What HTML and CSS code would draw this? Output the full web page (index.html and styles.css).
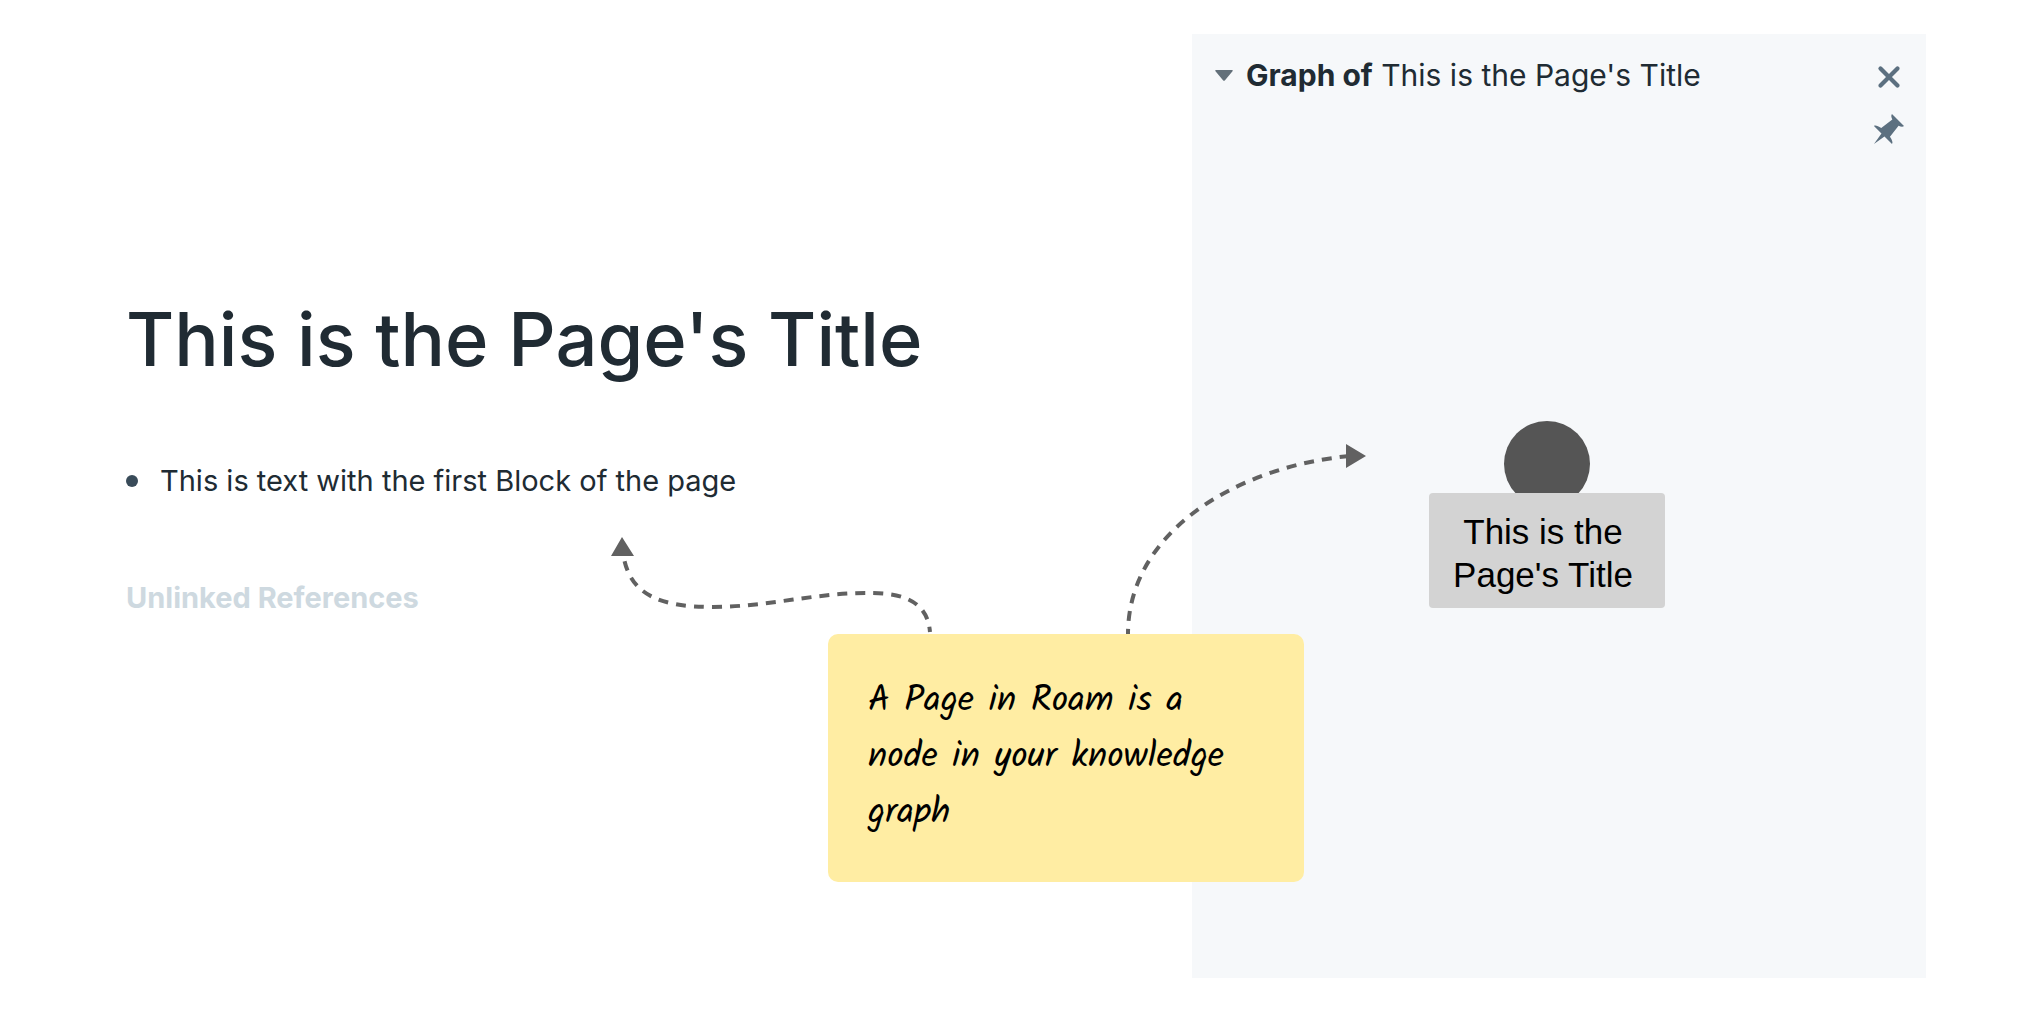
FILE: index.html
```html
<!DOCTYPE html>
<html lang="en">
<head>
<meta charset="utf-8">
<meta name="viewport" content="width=device-width, initial-scale=1">
<title>This is the Page's Title</title>
<link rel="stylesheet" href="styles.css">
</head>
<body>
<div class="workspace">
  <main class="page">
    <h1 class="page-title">This is the Page's Title</h1>
    <ul class="blocks">
      <li class="block"><span class="bullet"></span>This is text with the first Block of the page</li>
    </ul>
    <h2 class="unlinked">Unlinked References</h2>
  </main>
  <aside class="sidebar">
    <header class="sidebar-header">
      <button class="icon-button toggle" type="button" aria-label="Collapse">
        <svg class="caret" viewBox="0 0 18 11"><path d="M1 0H17Q18.500 0 17.500 1.200L10 10.300Q9 11.400 8 10.300L.5 1.200Q-.5 0 1 0Z"/></svg>
      </button>
      <h2 class="sidebar-title"><strong>Graph of</strong> This is the Page's Title</h2>
    </header>
    <div class="tools">
      <button class="icon-button" type="button" aria-label="Close">
        <svg class="icon" viewBox="0 0 16 16"><path d="M9.410 8l3.290-3.290c.19-.18.3-.43.3-.71a1.003 1.003 0 0 0-1.710-.71L8 6.590 4.710 3.290a1.003 1.003 0 0 0-1.420 1.420L6.590 8 3.300 11.290c-.19.18-.3.43-.3.71a1.003 1.003 0 0 0 1.710.71L8 9.410l3.290 3.290c.18.19.43.3.71.3a1.003 1.003 0 0 0 .71-1.710L9.410 8z"/></svg>
      </button>
      <button class="icon-button" type="button" aria-label="Pin">
        <svg class="icon" viewBox="0 0 16 16"><path d="M9.410.92c-.51.51-.41 1.500.15 2.560L4.340 7.540C2.800 6.480 1.450 6.050.92 6.580l3.540 3.540-3.540 4.950 4.950-3.540 3.540 3.540c.53-.53.1-1.880-.96-3.420l4.060-5.220c1.060.56 2.040.66 2.550.15L9.410.92z"/></svg>
      </button>
    </div>
    <div class="graph">
      <span class="node-dot"></span>
      <a class="node-label" href="#">This is the Page's Title</a>
    </div>
    <div class="annotation">
      <svg class="arrows" viewBox="0 0 760 200" aria-hidden="true">
        <g class="arrow-line">
          <path d="M320 198C317 162 284 159 257 159C205 159 155 173 103 173C50 173 18 161 13 118"/>
          <path d="M518 200C518 96 630 32 740 22"/>
        </g>
        <path class="arrow-head" d="M12 103L24 122H1ZM756 22L736 10V34Z"/>
      </svg>
      <p class="note">A Page in Roam is a node in your knowledge graph</p>
    </div>
  </aside>
</div>
</body>
</html>
```
FILE: styles.css
```css
* {
  box-sizing: border-box;
}

body {
  margin: 0;
  background: #fff;
  color: #202b33;
  font-family: Inter, "Liberation Sans", sans-serif;
  font-size: 29px;
  line-height: 40px;
}

h1, h2, p, ul {
  margin: 0;
  padding: 0;
}

.workspace {
  display: grid;
  grid-template-columns: minmax(0, 533fr) minmax(0, 367fr);
  min-height: 100vh;
  padding: 34px 98px 34px 126px;
}

.page {
  display: flex;
  flex-direction: column;
  gap: 77px;
  padding-top: 260px;
}

.page-title {
  font-size: 74px;
  font-weight: 500;
  line-height: 90px;
}

.blocks {
  list-style: none;
}

.block {
  display: flex;
  align-items: center;
  gap: 22px;
}

.bullet {
  width: 12px;
  height: 12px;
  border-radius: 50%;
  background: #394b59;
}

.unlinked {
  color: #ced9e0;
  font-size: 29px;
  font-weight: 700;
}

.sidebar {
  position: relative;
  display: grid;
  grid-template-columns: 1fr auto;
  grid-template-rows: auto 1fr;
  padding: 20px;
  background: #f6f8fa;
}

.sidebar-header {
  display: flex;
  align-items: center;
  gap: 13px;
  height: 42px;
}

.sidebar-title {
  font-size: 30px;
  font-weight: 400;
}

.icon-button {
  display: block;
  padding: 0;
  border: 0;
  background: none;
}

.toggle {
  margin-left: 3px;
}

.caret {
  display: block;
  width: 18px;
  height: 11px;
  fill: #63707a;
}

.tools {
  display: flex;
  flex-direction: column;
  gap: 18px;
  grid-row: 1 / 3;
  grid-column: 2;
  padding-top: 6px;
}

.icon {
  display: block;
  width: 34px;
  height: 34px;
  fill: #5c7080;
}

.graph {
  display: flex;
  flex-direction: column;
  align-items: center;
  padding: 325px 0 0 10px;
}

.node-dot {
  width: 86px;
  height: 86px;
  margin-bottom: -14px;
  border-radius: 50%;
  background: #555;
}

.node-label {
  z-index: 1;
  width: 236px;
  padding: 17px 24px 12px 16px;
  border-radius: 4px;
  background: #d3d3d3;
  color: #000;
  font-family: "Liberation Sans", Arial, sans-serif;
  font-size: 35px;
  line-height: 43px;
  text-align: center;
  text-decoration: none;
}

.annotation {
  position: absolute;
  top: 400px;
  left: -582px;
  width: 760px;
}

.arrows {
  display: block;
  width: 100%;
}

.arrow-line {
  fill: none;
  stroke: #616161;
  stroke-width: 4;
  stroke-dasharray: 10 8;
  stroke-dashoffset: 5;
}

.arrow-head {
  fill: #616161;
}

.note {
  width: 476px;
  margin-left: 218px;
  padding: 40px;
  border-radius: 10px;
  background: #ffeda3;
  color: #000;
  font-family: Kalam, Lato, sans-serif;
  font-size: 36px;
  line-height: 56px;
}
```
